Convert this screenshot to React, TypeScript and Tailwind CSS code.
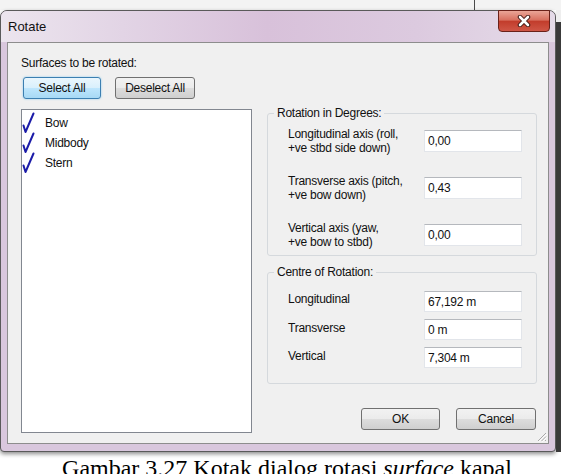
import React from 'react';

function Check() {
  return (
    <svg width="14" height="22" viewBox="0 0 14 22" className="shrink-0">
      <path d="M1.5 13.5 L3.5 20 L11.5 1.5" fill="none" stroke="#1c1ca8" strokeWidth="2" strokeLinecap="round" strokeLinejoin="round" />
    </svg>
  );
}

function WinButton({ children, primary, w }: { children: React.ReactNode; primary?: boolean; w: string }) {
  return (
    <div
      className={
        (primary
          ? 'border-[#3c7fb1] bg-[linear-gradient(#eaf6fd_0%,#d9f0fc_49%,#bee6fd_50%,#a7d9f5_100%)] shadow-[0_0_2px_#7fc6ee] '
          : 'border-[#707070] bg-[linear-gradient(#f2f2f2_0%,#ebebeb_49%,#dddddd_50%,#cfcfcf_100%)] ') +
        w +
        ' h-[22px] border rounded-[3px] flex items-center justify-center text-[#111]'
      }
    >
      {children}
    </div>
  );
}

function TextBox({ value, h = 'h-[22px]' }: { value: string; h?: string }) {
  return (
    <div className={h + ' w-[98px] shrink-0 bg-white border border-[#e2e5ea] border-t-[#b5b8bd] pl-[3px] flex items-center text-[#111]'}>
      {value}
    </div>
  );
}

export default function App() {
  const items = ['Bow', 'Midbody', 'Stern'];
  return (
    <div className="w-[561px] h-[474px] bg-white overflow-hidden font-['Liberation_Sans',Arial,sans-serif] text-[12px] tracking-[-0.25px] leading-[14px]">
      {/* strip above the dialog */}
      <div className="h-[10px] flex bg-[#f3f3f3]">
        <div className="ml-[474px] w-px bg-[#4a4a4a]" />
      </div>

      <div className="flex">
        {/* dialog window */}
        <div className="w-[556px] shrink-0 flex flex-col border border-[#5a5a5a] rounded-t-[7px] rounded-b-[4px] bg-[#d9c7dd] shadow-[0_2px_4px_rgba(0,0,0,0.45)]">
          {/* title bar */}
          <div className="h-[31px] flex items-start justify-between rounded-t-[6px] bg-[linear-gradient(90deg,#ece5ee_0%,#e2d4e5_22%,#d8c1da_48%,#dccadf_75%,#e5dbe8_100%)]">
            <div className="h-full flex items-center pl-[7px] text-[13px] tracking-normal text-[#111]">Rotate</div>
            <div className="-mt-px mr-[5px] w-[52px] h-[22px] rounded-b-[4px] border border-[#6a2119] bg-[linear-gradient(#eaa597_0%,#d8705f_45%,#c23d2c_52%,#cf5646_100%)] flex items-center justify-center">
              <svg width="14" height="12" viewBox="0 0 14 12">
                <path d="M3 2 L11 10 M11 2 L3 10" stroke="#3a1410" strokeWidth="4.5" strokeLinecap="round" />
                <path d="M3 2 L11 10 M11 2 L3 10" stroke="#ffffff" strokeWidth="2.6" strokeLinecap="round" />
              </svg>
            </div>
          </div>

          {/* client area */}
          <div className="relative mx-[6px] h-[402px] border border-[#8d8d8d] bg-[#f0f0f0] flex pl-[13px] pt-[13px] pb-[10px] pr-[10px] text-[#111]">
            {/* left column */}
            <div className="w-[231px] flex flex-col">
              <div>Surfaces to be rotated:</div>
              <div className="mt-[7px] ml-[2px] flex gap-[14px]">
                <WinButton primary w="w-[78px]">Select All</WinButton>
                <WinButton w="w-[80px]">Deselect All</WinButton>
              </div>
              <div className="mt-[10px] flex-1 bg-white border border-[#828790] pt-[3px]">
                {items.map((it) => (
                  <div key={it} className="h-5 flex items-center gap-[9px]">
                    <Check />
                    <span>{it}</span>
                  </div>
                ))}
              </div>
            </div>

            {/* right column */}
            <div className="ml-[15px] w-[270px] mt-[50px] flex flex-col">
              <fieldset className="border border-[#d5d9dd] rounded-[3px]">
                <legend className="ml-[6px] px-[3px]">Rotation in Degrees:</legend>
                <div className="pt-[7px] pb-[6px] pl-[20px] pr-[14px] flex flex-col gap-[19px]">
                  <div className="h-[28px] flex items-center justify-between">
                    <div>Longitudinal axis (roll,<br />+ve stbd side down)</div>
                    <TextBox value="0,00" />
                  </div>
                  <div className="h-[28px] flex items-center justify-between">
                    <div>Transverse axis (pitch,<br />+ve bow down)</div>
                    <TextBox value="0,43" />
                  </div>
                  <div className="h-[28px] flex items-center justify-between">
                    <div>Vertical axis (yaw,<br />+ve bow to stbd)</div>
                    <TextBox value="0,00" />
                  </div>
                </div>
              </fieldset>

              <fieldset className="mt-[9px] border border-[#d5d9dd] rounded-[3px]">
                <legend className="ml-[6px] px-[3px]">Centre of Rotation:</legend>
                <div className="pt-[12px] pb-[15px] pl-[20px] pr-[14px] flex flex-col gap-[7px]">
                  <div className="flex items-start justify-between">
                    <div className="pt-[1px]">Longitudinal</div>
                    <TextBox value="67,192 m" h="h-[21px]" />
                  </div>
                  <div className="flex items-start justify-between">
                    <div className="pt-[2px]">Transverse</div>
                    <TextBox value="0 m" h="h-[21px]" />
                  </div>
                  <div className="flex items-start justify-between">
                    <div className="pt-[2px]">Vertical</div>
                    <TextBox value="7,304 m" h="h-[21px]" />
                  </div>
                </div>
              </fieldset>

              <div className="mt-auto mb-[3px] pr-[1px] flex justify-end gap-[16px]">
                <WinButton w="w-[79px]">OK</WinButton>
                <WinButton w="w-[80px]">Cancel</WinButton>
              </div>
            </div>

            {/* resize grip */}
            <svg className="absolute right-[1px] bottom-[1px]" width="12" height="12" viewBox="0 0 12 12">
              <path d="M11 3 L3 11 M11 6.5 L6.5 11 M11 10 L10 11" stroke="#a8a8a8" strokeWidth="1" />
              <path d="M11.8 3.8 L3.8 11.8 M11.8 7.3 L7.3 11.8" stroke="#ffffff" strokeWidth="1" />
            </svg>
          </div>
          <div className="h-[7px]" />
        </div>

        {/* background to the right of the dialog */}
        <div className="flex-1 flex flex-col">
          <div className="h-[12px] bg-[#eeeeee]" />
          <div className="flex-1 bg-[#3a3a3a]" />
        </div>
      </div>

      {/* caption */}
      <div className="mt-[4px] pl-[13px] text-center font-['Liberation_Serif','Times_New_Roman',serif] text-[24px] leading-[24px] tracking-normal text-black">
        Gambar 3.27 Kotak dialog rotasi <i>surface</i> kapal
      </div>
    </div>
  );
}
